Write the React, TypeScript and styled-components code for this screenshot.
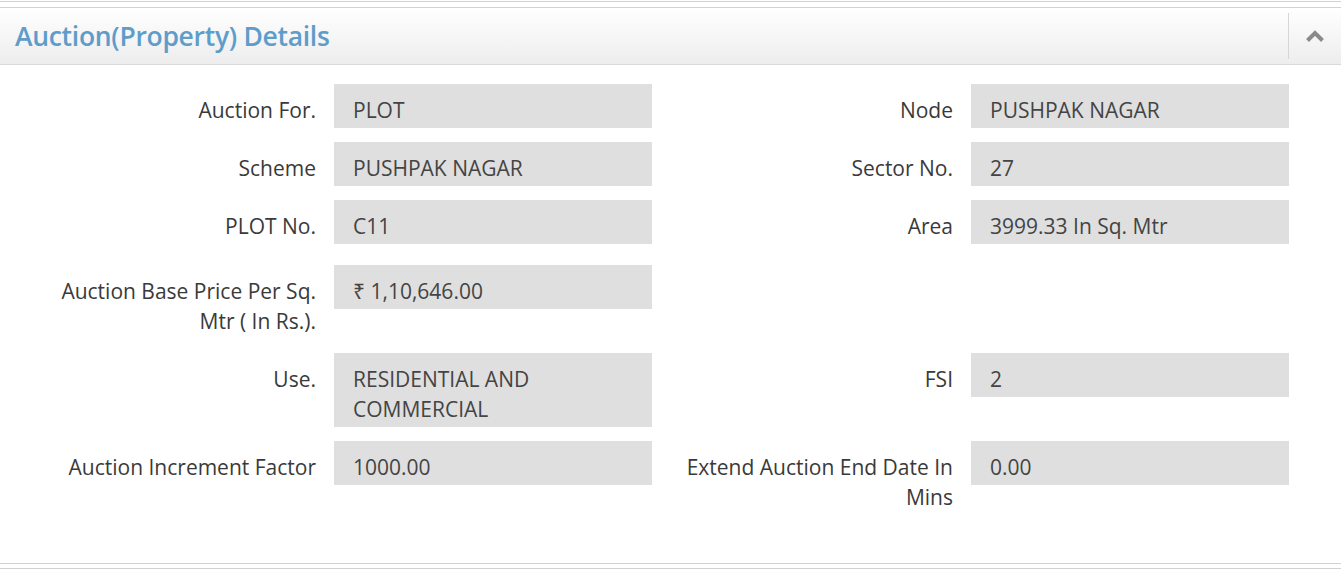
import React from 'react';
import styled, { createGlobalStyle } from 'styled-components';

const GlobalStyle = createGlobalStyle`
	html, body {
		margin: 0;
		padding: 0;
		background: #fff;
	}
	body {
		font-family: 'Open Sans', 'Noto Sans', sans-serif;
		color: #333;
	}
`;

const Page = styled.div`
	width: 1341px;
	margin-top: 1px;
	padding-top: 1px;
	border-top: 1px solid #d2d2d2;
`;

const Panel = styled.section`
	margin-top: 4px;
	border-top: 1px solid #d2d2d2;
	border-bottom: 1px solid #d2d2d2;
`;

const Header = styled.div`
	height: 56px;
	display: flex;
	align-items: center;
	background: linear-gradient(to bottom, #ffffff 0%, #ededed 100%);
	border-bottom: 1px solid #d9d9d9;
`;

const Title = styled.h2`
	flex: 1;
	margin: 0;
	padding-left: 15px;
	font-size: 26.5px;
	font-weight: 600;
	letter-spacing: -0.3px;
	color: #5e9dc9;
`;

const Toggle = styled.button`
	width: 52px;
	height: 46px;
	border: none;
	border-left: 1px solid #d6d6d6;
	background: transparent;
	display: flex;
	align-items: center;
	justify-content: center;
	padding: 0;
	margin-right: 1px;
`;

const Body = styled.div`
	padding: 19px 0 34px 15px;
`;

/* sibling margins collapse, so $gap is the whole space above the row */
const Row = styled.div<{ $gap?: number }>`
	display: grid;
	grid-template-columns: 637px 637px;
	margin-top: ${(p) => p.$gap ?? 0}px;
	margin-bottom: 14px;
`;

const Field = styled.div`
	display: flex;
	align-items: flex-start;
	padding-left: 26px;
`;

const Label = styled.label`
	width: 275px;
	margin-right: 18px;
	padding: 11px 0 3px;
	text-align: right;
	font-size: 21px;
	line-height: 30px;
	color: #3a3a3a;
`;

const Value = styled.div`
	width: 318px;
	box-sizing: border-box;
	padding: 11px 19px 3px;
	background: #dfdfdf;
	font-size: 21px;
	line-height: 30px;
	color: #444;
`;

type Item = { label: string; value: string } | null;

const rows: { items: Item[]; gap?: number }[] = [
	{ items: [{ label: 'Auction For.', value: 'PLOT' }, { label: 'Node', value: 'PUSHPAK NAGAR' }] },
	{ items: [{ label: 'Scheme', value: 'PUSHPAK NAGAR' }, { label: 'Sector No.', value: '27' }] },
	{ items: [{ label: 'PLOT No.', value: 'C11' }, { label: 'Area', value: '3999.33 In Sq. Mtr' }] },
	{ items: [{ label: 'Auction Base Price Per Sq. Mtr ( In Rs.).', value: '₹ 1,10,646.00' }, null], gap: 21 },
	{ items: [{ label: 'Use.', value: 'RESIDENTIAL AND COMMERCIAL' }, { label: 'FSI', value: '2' }] },
	{ items: [{ label: 'Auction Increment Factor', value: '1000.00' }, { label: 'Extend Auction End Date In Mins', value: '0.00' }] },
];

const ChevronUp = () => (
	<svg width="20" height="14" viewBox="0 0 20 14">
		<path d="M2.5 11.5 L10 4 L17.5 11.5" fill="none" stroke="#8a8a8a" strokeWidth="4" strokeLinejoin="miter" />
	</svg>
);

export default function App() {
	return (
		<Page>
			<GlobalStyle />
			<Panel>
				<Header>
					<Title>Auction(Property) Details</Title>
					<Toggle aria-label="collapse">
						<ChevronUp />
					</Toggle>
				</Header>
				<Body>
					{rows.map((r, i) => (
						<Row key={i} $gap={r.gap}>
							{r.items.map((it, j) =>
								it ? (
									<Field key={j}>
										<Label>{it.label}</Label>
										<Value>{it.value}</Value>
									</Field>
								) : (
									<div key={j} />
								)
							)}
						</Row>
					))}
				</Body>
			</Panel>
			<Panel />
		</Page>
	);
}
